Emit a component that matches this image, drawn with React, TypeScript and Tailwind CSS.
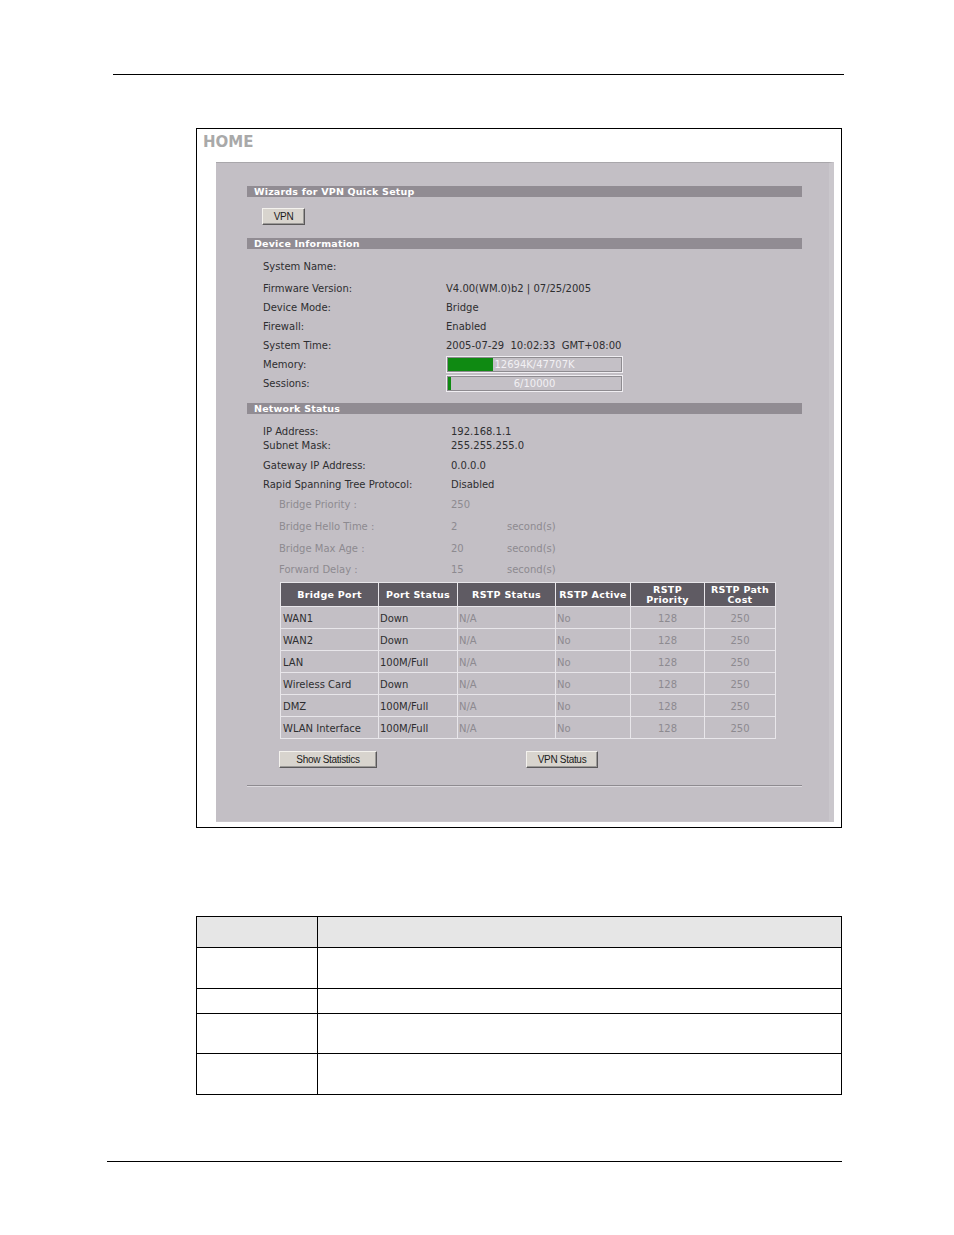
import React from "react";

const F = { fontFamily: '"DejaVu Sans", Verdana, sans-serif' };

function SectionBar({ title }: { title: string }) {
  return (
    <div className="h-[11px] w-[555px] bg-[#918c93] pl-[7px] text-[9.5px] leading-[11px] font-bold text-white tracking-[0.2px]">
      {title}
    </div>
  );
}

function InfoRow({ label, value, h, mt }: { label: string; value: React.ReactNode; h: string; mt?: string }) {
  return (
    <div className={`flex items-center ${h} ${mt ?? ""}`}>
      <div className="w-[199px] pl-[16px] text-[#2e2e30]">{label}</div>
      <div className="text-[#2e2e30]">{value}</div>
    </div>
  );
}

function Bar({ pct, text }: { pct: number; text: string }) {
  return (
    <div className="relative h-[17px] w-[177px] border border-[#f0eef2] bg-[#c4c0c6] p-px shadow-[inset_0_0_0_1px_#8e8b90]">
      <div className="h-full bg-[#0f8a12]" style={{ width: `${pct}%` }} />
      <div className="absolute inset-0 flex items-center justify-center text-[10px] text-[#f2f0f4]">{text}</div>
    </div>
  );
}

function NetRow({ label, value, h, mt }: { label: string; value: string; h: string; mt?: string }) {
  return (
    <div className={`flex items-center ${h} ${mt ?? ""}`}>
      <div className="w-[204px] pl-[16px] text-[#2e2e30]">{label}</div>
      <div className="text-[#2e2e30]">{value}</div>
    </div>
  );
}

function SubRow({ label, value, unit, h }: { label: string; value: string; unit?: string; h: string }) {
  return (
    <div className={`flex items-center ${h} text-[#8d8a90]`}>
      <div className="w-[204px] pl-[32px]">{label}</div>
      <div className="w-[56px]">{value}</div>
      <div>{unit ?? ""}</div>
    </div>
  );
}

const rows = [
  ["WAN1", "Down"],
  ["WAN2", "Down"],
  ["LAN", "100M/Full"],
  ["Wireless Card", "Down"],
  ["DMZ", "100M/Full"],
  ["WLAN Interface", "100M/Full"],
];

function WinButton({ children, w }: { children: React.ReactNode; w: string }) {
  return (
    <div
      className={`${w} flex h-[17px] items-center justify-center border border-t-[#f4f2ee] border-l-[#f4f2ee] border-r-[#5a585a] border-b-[#5a585a] bg-[#d8d4ce] text-[10px] tracking-[-0.3px] text-[#1a1a1a] shadow-[inset_-1px_-1px_0_#9c9a98]`}
      style={{ fontFamily: '"Liberation Sans", Arial, sans-serif' }}
    >
      {children}
    </div>
  );
}

export default function App() {
  return (
    <div className="relative h-[1235px] w-[954px] overflow-hidden bg-white" style={F}>
      <div className="pt-[74px]">
        <div className="ml-[113px] h-px w-[731px] bg-black" />
      </div>

      {/* Screenshot frame */}
      <div className="ml-[196px] mt-[53px] h-[700px] w-[646px] border border-black bg-white">
        <div className="h-[33px] pl-[6px] pt-[3px] text-[15px] font-bold leading-[20px] text-[#a9a9a9]">HOME</div>
        <div className="ml-[19px] h-[660px] w-[618px] border-t border-t-[#a9a7ab] border-r-[5px] border-r-[#cac7cc] border-b border-b-[#cac7cc] bg-[#c3bfc5] pl-[31px] text-[10px] leading-[12px]">
          <div className="pt-[23px]">
            <SectionBar title="Wizards for VPN Quick Setup" />
            <div className="ml-[15px] mt-[11px]">
              <WinButton w="w-[43px]">VPN</WinButton>
            </div>
            <div className="mt-[13px]">
              <SectionBar title="Device Information" />
            </div>
            <div className="mt-[8px]">
              <InfoRow label="System Name:" value="" h="h-[19px]" />
              <InfoRow label="Firmware Version:" value="V4.00(WM.0)b2 | 07/25/2005" h="h-[19px]" mt="mt-[3px]" />
              <InfoRow label="Device Mode:" value="Bridge" h="h-[19px]" />
              <InfoRow label="Firewall:" value="Enabled" h="h-[19px]" />
              <InfoRow label="System Time:" value={<span className="whitespace-pre">2005-07-29  10:02:33  GMT+08:00</span>} h="h-[19px]" />
              <InfoRow label="Memory:" value={<Bar pct={26} text="12694K/47707K" />} h="h-[19px]" />
              <InfoRow label="Sessions:" value={<Bar pct={1.5} text="6/10000" />} h="h-[19px]" />
            </div>
            <div className="mt-[10px]">
              <SectionBar title="Network Status" />
            </div>
            <div className="mt-[11px]">
              <NetRow label="IP Address:" value="192.168.1.1" h="h-[14px]" />
              <NetRow label="Subnet Mask:" value="255.255.255.0" h="h-[14px]" />
              <NetRow label="Gateway IP Address:" value="0.0.0.0" h="h-[19px]" mt="mt-[3px]" />
              <NetRow label="Rapid Spanning Tree Protocol:" value="Disabled" h="h-[19px]" />
              <SubRow label="Bridge Priority :" value="250" h="h-[22px]" />
              <SubRow label="Bridge Hello Time :" value="2" unit="second(s)" h="h-[22px]" />
              <SubRow label="Bridge Max Age :" value="20" unit="second(s)" h="h-[21px]" />
              <SubRow label="Forward Delay :" value="15" unit="second(s)" h="h-[22px]" />
            </div>
            <div className="ml-[33px] mt-[1px]">
              <table className="w-[495px] table-fixed border-collapse">
                <colgroup>
                  <col className="w-[98px]" />
                  <col className="w-[79px]" />
                  <col className="w-[98px]" />
                  <col className="w-[75px]" />
                  <col className="w-[74px]" />
                  <col className="w-[71px]" />
                </colgroup>
                <thead>
                  <tr className="h-[24px] bg-[#5f5b63] text-white">
                    {["Bridge Port", "Port Status", "RSTP Status", "RSTP Active", "RSTP\nPriority", "RSTP Path\nCost"].map((h) => (
                      <th key={h} className="whitespace-pre-line border border-[#e8e6ea] p-0 text-center text-[9.5px] font-bold leading-[10px] tracking-[0.3px]">
                        {h}
                      </th>
                    ))}
                  </tr>
                </thead>
                <tbody>
                  {rows.map(([a, b]) => (
                    <tr key={a} className="h-[22px]">
                      <td className="border border-[#e8e6ea] pl-[2px] pt-[2px] text-[#2e2e30]">{a}</td>
                      <td className="border border-[#e8e6ea] pl-[1px] pt-[2px] text-[#2e2e30]">{b}</td>
                      <td className="border border-[#e8e6ea] pl-[1px] pt-[2px] text-[#8d8a90]">N/A</td>
                      <td className="border border-[#e8e6ea] pl-[1px] pt-[2px] text-[#8d8a90]">No</td>
                      <td className="border border-[#e8e6ea] pt-[2px] text-center text-[#8d8a90]">128</td>
                      <td className="border border-[#e8e6ea] pt-[2px] text-center text-[#8d8a90]">250</td>
                    </tr>
                  ))}
                </tbody>
              </table>
            </div>
            <div className="ml-[32px] mt-[12px] flex">
              <WinButton w="w-[98px]">Show Statistics</WinButton>
              <div className="ml-[149px]">
                <WinButton w="w-[72px]">VPN Status</WinButton>
              </div>
            </div>
            <div className="mt-[17px] h-px w-[555px] bg-[#8e8b90] shadow-[0_1px_0_#dcd9de]" />
          </div>
        </div>
      </div>

      {/* Description table */}
      <div className="ml-[196px] mt-[88px] w-[646px] border border-black">
        <div className="flex h-[31px] border-b border-black bg-[#e6e6e6]">
          <div className="w-[121px] border-r border-black" />
          <div className="flex-1" />
        </div>
        <div className="flex h-[41px] border-b border-black">
          <div className="w-[121px] border-r border-black" />
          <div className="flex-1" />
        </div>
        <div className="flex h-[25px] border-b border-black">
          <div className="w-[121px] border-r border-black" />
          <div className="flex-1" />
        </div>
        <div className="flex h-[40px] border-b border-black">
          <div className="w-[121px] border-r border-black" />
          <div className="flex-1" />
        </div>
        <div className="flex h-[40px]">
          <div className="w-[121px] border-r border-black" />
          <div className="flex-1" />
        </div>
      </div>

      <div className="ml-[107px] mt-[66px] h-px w-[735px] bg-black" />
    </div>
  );
}
